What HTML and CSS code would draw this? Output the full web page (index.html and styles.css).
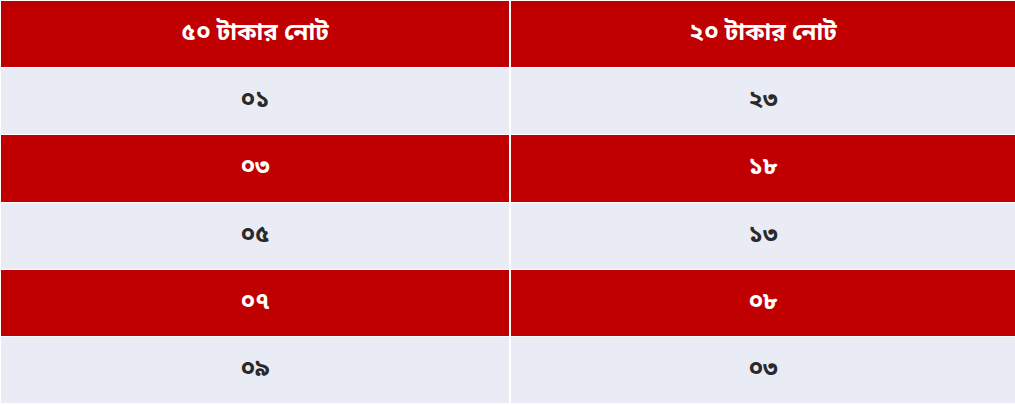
FILE: index.html
```html
<!DOCTYPE html>
<html lang="bn">
<head>
<meta charset="utf-8">
<link rel="stylesheet" href="styles.css">
</head>
<body>
<div class="table">
  <div class="cell head">৫০ টাকার নোট</div>
  <div class="cell head">২০ টাকার নোট</div>
  <div class="cell light">০১</div>
  <div class="cell light">২৩</div>
  <div class="cell red">০৩</div>
  <div class="cell red">১৮</div>
  <div class="cell light">০৫</div>
  <div class="cell light">১৩</div>
  <div class="cell red">০৭</div>
  <div class="cell red">০৮</div>
  <div class="cell light">০৯</div>
  <div class="cell light">০৩</div>
</div>
</body>
</html>
```
FILE: styles.css
```css
html, body {
  margin: 0;
  padding: 0;
  background: #ffffff;
}
.table {
  display: grid;
  grid-template-columns: 508px 1fr;
  grid-auto-rows: 66.2px;
  column-gap: 2px;
  row-gap: 1px;
  padding: 1px 0 0 1px;
  width: 1014px;
  font-family: "Noto Sans Bengali", "Noto Sans", "Noto Sans CJK SC", sans-serif;
  font-weight: 700;
  font-size: 24px;
}
.cell {
  display: flex;
  align-items: center;
  justify-content: center;
}
.head, .red {
  background: #c00000;
  color: #ffffff;
}
.light {
  background: #e9ecf5;
  color: #2a2a2a;
}
```
